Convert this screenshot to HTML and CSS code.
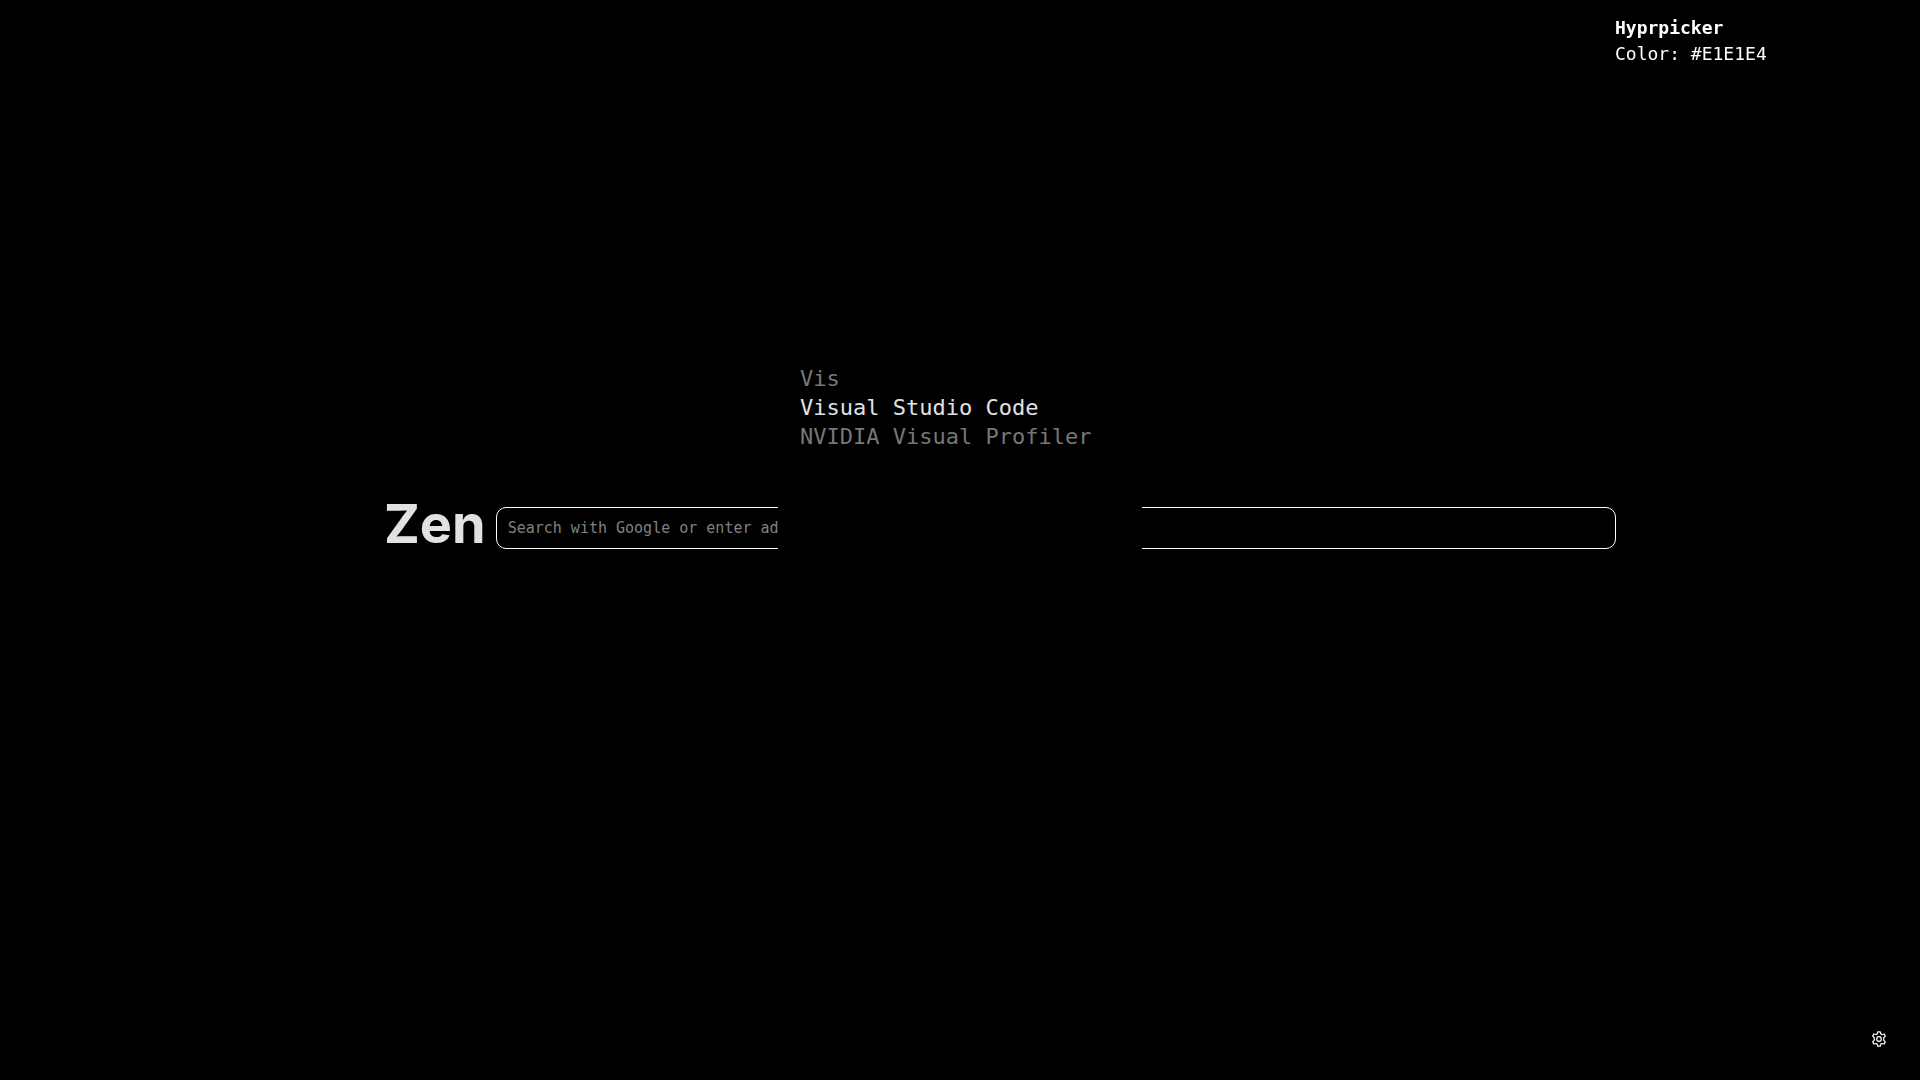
FILE: index.html
```html
<!DOCTYPE html>
<html lang="en">
<head>
  <meta charset="utf-8">
  <meta name="viewport" content="width=device-width, initial-scale=1">
  <title>Zen</title>
  <link rel="stylesheet" href="styles.css">
</head>
<body>
  <main class="start">
    <form class="search" role="search">
      <label class="search-title" for="query">Zen</label>
      <input class="search-box" id="query" type="search" placeholder="Search with Google or enter address">
    </form>
  </main>

  <button class="settings" type="button" aria-label="Settings">
    <svg class="settings-icon" viewBox="0 0 16 16" fill="none" stroke="currentColor" stroke-width="1.25" stroke-linejoin="round" aria-hidden="true">
      <path d="M6.800.8h2.400l.7 2.200.9.5 2.300-.5 1.200 2.100-1.600 1.800v2.200l1.600 1.800-1.200 2.100-2.300-.5-.9.5-.7 2.200H6.800L6.100 13l-.9-.5-2.300.5-1.200-2.100 1.600-1.800V6.900L1.700 5.100 2.900 3l2.300.5.9-.5z"/>
      <circle cx="8" cy="8" r="2.300"/>
    </svg>
  </button>

  <section class="launcher" aria-label="Application launcher">
    <input class="launcher-input" type="text" value="Vis" aria-label="Search applications">
    <button class="launcher-item launcher-item-selected" type="button">Visual Studio Code</button>
    <button class="launcher-item" type="button">NVIDIA Visual Profiler</button>
  </section>

  <aside class="notification" role="status">
    <strong class="notification-title">Hyprpicker</strong>
    <span>Color: #E1E1E4</span>
  </aside>
</body>
</html>
```
FILE: styles.css
```css
* {
  box-sizing: border-box;
}

body {
  margin: 0;
  background: #000;
  color: #e1e1e4;
  font-family: "DejaVu Sans Mono", "Liberation Mono", monospace;
}

input,
button {
  margin: 0;
  padding: 0;
  border: 0;
  background: transparent;
  color: inherit;
  font: inherit;
}

.start {
  display: flex;
  align-items: center;
  min-height: 100vh;
  padding: 0 304px 24px 20%;
}

.search {
  display: flex;
  flex: 1;
  align-items: center;
  gap: 10px;
}

.search-title {
  flex: none;
  padding-bottom: 8px;
  font: 700 54px/56px Inter, sans-serif;
}

.search-box {
  flex: 1;
  min-width: 0;
  height: 42px;
  padding: 0 11px;
  border: 1px solid #fff;
  border-radius: 10px;
  font-size: 15px;
  appearance: none;
}

.search-box::placeholder {
  color: #808080;
  opacity: 1;
}

.settings {
  position: fixed;
  right: 33px;
  bottom: 33px;
  display: flex;
  color: #fff;
}

.settings-icon {
  width: 16px;
  height: 16px;
}

.launcher {
  position: fixed;
  top: 50%;
  left: 50%;
  display: flex;
  flex-direction: column;
  width: 364px;
  height: 380px;
  padding: 14px 22px;
  background: #000;
  color: #777;
  font-size: 22px;
  line-height: 29px;
  transform: translate(-50%, -50%);
}

.launcher-input,
.launcher-item {
  height: 29px;
  text-align: left;
}

.launcher-item-selected {
  color: #e1e1e4;
}

.notification {
  position: fixed;
  top: 15px;
  right: 25px;
  display: flex;
  flex-direction: column;
  width: 280px;
  color: #fff;
  font-size: 18px;
  line-height: 26px;
}

.notification-title {
  font-weight: 700;
}
```
